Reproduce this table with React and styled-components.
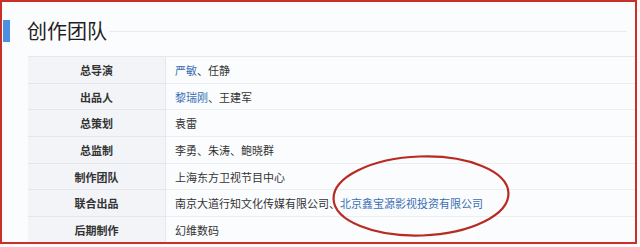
import React from "react";
import styled, { createGlobalStyle } from "styled-components";

const Global = createGlobalStyle`
  html, body { margin: 0; padding: 0; background: #fdf8f8; }
  body { font-family: "Noto Sans CJK SC", "Noto Sans", sans-serif; }
`;

const Page = styled.div`
  width: 640px;
  height: 247px;
  overflow: hidden;
  background: #fdf9f9;
`;

const Frame = styled.div`
  position: relative;
  box-sizing: border-box;
  width: 637px;
  height: 244px;
  border: 2px solid #c9302a;
  border-top-width: 2px;
  background: #fbfcfd;
  overflow: hidden;
`;

const Heading = styled.div`
  display: flex;
  align-items: center;
  height: 22px;
  margin-top: 18px;
  padding-left: 1px;
`;

const Bar = styled.div`
  width: 7px;
  height: 22px;
  background: #4d8fe0;
  margin-right: 17px;
`;

const Title = styled.h2`
  margin: 0;
  font-size: 20px;
  font-weight: 400;
  line-height: 22px;
  color: #1f1f1f;
  letter-spacing: 0;
`;

const Rule = styled.div`
  flex: 1;
  height: 1px;
  background: #e9ebef;
  margin-left: 2px;
  margin-right: 8px;
`;

const Table = styled.div`
  display: grid;
  grid-template-columns: 138px 1fr;
  grid-auto-rows: 26.7px;
  margin: 14px 0 0 26px;
  border-top: 1px solid #e6e8ec;
`;

const Label = styled.div`
  display: flex;
  align-items: center;
  justify-content: center;
  background: #f2f4f7;
  border-bottom: 1px solid #e4e6ea;
  border-right: 1px solid #e6e8ec;
  font-size: 11px;
  font-weight: 700;
  color: #333;
`;

const Value = styled.div`
  display: flex;
  align-items: center;
  padding-left: 9px;
  background: #fbfcfd;
  border-bottom: 1px solid #eceef1;
  font-size: 11px;
  color: #333;
  white-space: nowrap;
`;

const Link = styled.span`
  color: ${(p) => (p.$strong ? "#2d63a8" : "#3a6fb3")};
`;

const Circle = styled.svg`
  position: absolute;
  left: 328px;
  top: 151px;
  width: 186px;
  height: 90px;
  overflow: visible;
  pointer-events: none;
`;

const rows = [
  ["总导演", [["严敏", true], ["、任静", false]]],
  ["出品人", [["黎瑞刚", true], ["、王建军", false]]],
  ["总策划", [["袁雷", false]]],
  ["总监制", [["李勇、朱涛、鲍晓群", false]]],
  ["制作团队", [["上海东方卫视节目中心", false]]],
  ["联合出品", [["南京大道行知文化传媒有限公司、", false], ["北京鑫宝源影视投资有限公司", true]]],
  ["后期制作", [["幻维数码", false]]],
];

export default function App() {
  return (
    <Page>
      <Global />
      <Frame>
        <Heading>
          <Bar />
          <Title>创作团队</Title>
          <Rule />
        </Heading>
        <Table>
          {rows.map(([label, parts]) => (
            <React.Fragment key={label}>
              <Label>{label}</Label>
              <Value>
                {parts.map(([t, link], i) =>
                  link ? <Link key={i}>{t}</Link> : <span key={i}>{t}</span>
                )}
              </Value>
            </React.Fragment>
          ))}
        </Table>
        <Circle viewBox="0 0 186 90">
          <ellipse cx="91" cy="43" rx="87.5" ry="39.5" fill="none" stroke="#b82a22" strokeWidth="2.2" transform="rotate(-2 91 43)" />
        </Circle>
      </Frame>
    </Page>
  );
}
